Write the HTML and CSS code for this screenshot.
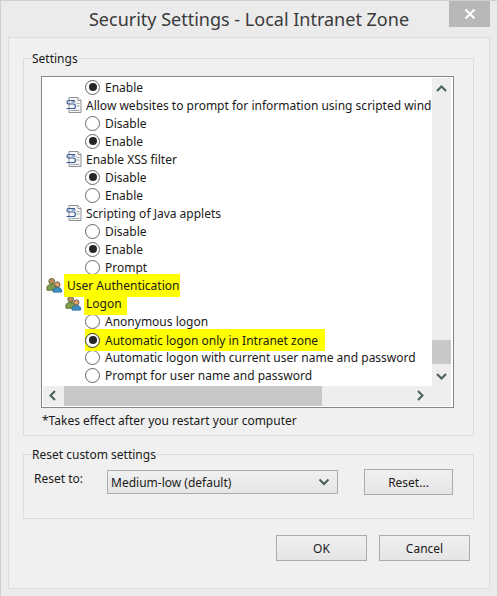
FILE: index.html
```html
<!DOCTYPE html>
<html lang="en">

<head>
    <meta charset="UTF-8">
    <title>Security Settings - Local Intranet Zone</title>
    <link rel="stylesheet" href="styles.css">
</head>

<body>
    <svg class="icon-defs" width="0" height="0">
        <symbol id="script-icon" viewBox="0 0 16 16">
            <path d="M3.500 .5h9l3 3v12h-12z" fill="#f6f6f6" stroke="#8d8f92"/>
            <path d="M12.500 .5v3h3" fill="#fff" stroke="#8d8f92"/>
            <path d="M9.500 3.500H3C1 3.500 1 7 3 7h5C10.500 7 10.500 11.500 8 11.500H1" fill="none" stroke="#3a5f9c" stroke-width="1.200"/>
            <path d="M6 5h4" stroke="#3a5f9c"/>
            <path d="M11 6.500h3M11 9h3M5 13.500h9" stroke="#a5a8ab"/>
        </symbol>
        <symbol id="users-icon" viewBox="0 0 18 16">
            <circle cx="6" cy="4" r="3" fill="#b98a5a" stroke="#5b6b3a"/>
            <path d="M1 13.500v-3c0-2 2-3 5-3s5 1 5 3v3z" fill="#7d9c4c" stroke="#55702f"/>
            <circle cx="12" cy="7.500" r="2.800" fill="#d9a36b" stroke="#6b5436"/>
            <path d="M7.500 15.500v-2c0-1.800 2-2.800 4.500-2.800s4.500 1 4.500 2.800v2z" fill="#3d8fc4" stroke="#2a6a96"/>
        </symbol>
    </svg>

    <div class="window">
        <div class="title-bar">Security Settings - Local Intranet Zone</div>
        <button class="close-btn" type="button" aria-label="Close">
            <svg width="12" height="12" viewBox="0 0 12 12">
                <path d="M1.500 1.500l9 9M10.500 1.500l-9 9" stroke="#fff" stroke-width="2"/>
            </svg>
        </button>

        <div class="client">
            <fieldset class="group">
                <legend>Settings</legend>

                <div class="list-box">
                    <div class="list-items">
                        <div class="row option"><span class="radio checked"></span>Enable</div>
                        <div class="row heading"><svg class="row-icon"><use href="#script-icon"/></svg>Allow websites to prompt for information using scripted windows</div>
                        <div class="row option"><span class="radio"></span>Disable</div>
                        <div class="row option"><span class="radio checked"></span>Enable</div>
                        <div class="row heading"><svg class="row-icon"><use href="#script-icon"/></svg>Enable XSS filter</div>
                        <div class="row option"><span class="radio checked"></span>Disable</div>
                        <div class="row option"><span class="radio"></span>Enable</div>
                        <div class="row heading"><svg class="row-icon"><use href="#script-icon"/></svg>Scripting of Java applets</div>
                        <div class="row option"><span class="radio"></span>Disable</div>
                        <div class="row option"><span class="radio checked"></span>Enable</div>
                        <div class="row option"><span class="radio"></span>Prompt</div>
                        <div class="row top-heading"><svg class="row-icon"><use href="#users-icon"/></svg><span class="marker marker-auth">User Authentication</span></div>
                        <div class="row heading"><svg class="row-icon"><use href="#users-icon"/></svg><span class="marker marker-logon">Logon</span></div>
                        <div class="row option"><span class="radio"></span>Anonymous logon</div>
                        <div class="row option"><span class="marker marker-auto"><span class="radio checked"></span>Automatic logon only in Intranet zone</span></div>
                        <div class="row option"><span class="radio"></span>Automatic logon with current user name and password</div>
                        <div class="row option"><span class="radio"></span>Prompt for user name and password</div>
                    </div>

                    <div class="scroll-v">
                        <svg class="arrow" width="19" height="20" viewBox="0 0 19 20"><path d="M5 13l4.500-4.500 4.500 4.500" class="chevron"/></svg>
                        <div class="track-v"><div class="thumb-v"></div></div>
                        <svg class="arrow" width="19" height="20" viewBox="0 0 19 20"><path d="M5 8l4.500 4.500 4.500-4.500" class="chevron"/></svg>
                    </div>

                    <div class="scroll-h">
                        <svg class="arrow" width="21" height="20" viewBox="0 0 21 20"><path d="M12 5l-4.500 4.500 4.500 4.500" class="chevron"/></svg>
                        <div class="track-h"><div class="thumb-h"></div></div>
                        <svg class="arrow arrow-right" width="21" height="20" viewBox="0 0 21 20"><path d="M9 5l4.500 4.500-4.500 4.500" class="chevron"/></svg>
                    </div>

                    <div class="scroll-corner"></div>
                </div>

                <p class="note">*Takes effect after you restart your computer</p>
            </fieldset>

            <fieldset class="group reset-group">
                <legend>Reset custom settings</legend>

                <div class="reset-row">
                    <label class="reset-label">Reset to:</label>
                    <div class="combo">
                        <span>Medium-low (default)</span>
                        <svg width="12" height="8" viewBox="0 0 12 8"><path d="M1.500 1.500l4.500 4.500 4.500-4.500" class="chevron"/></svg>
                    </div>
                    <button class="btn btn-reset" type="button">Reset...</button>
                </div>
            </fieldset>

            <div class="actions">
                <button class="btn" type="button">OK</button>
                <button class="btn" type="button">Cancel</button>
            </div>
        </div>
    </div>
</body>

</html>
```

FILE: styles.css
```css
* {
    box-sizing: border-box;
}

html,
body {
    margin: 0;
    height: 100%;
}

body {
    font-family: "Noto Sans", "Open Sans", sans-serif;
    font-size: 12px;
    color: #1a1a1a;
    background-color: #ebebeb;
    overflow: hidden;
}

.icon-defs {
    position: absolute;
}

.window {
    position: relative;
    height: 596px;
    padding: 0 8px 7px;
    border-top: 1px solid #cfcfcf;
    border-left: 1px solid #cfcfcf;
    border-right: 1px solid #cfcfcf;
    display: flex;
    flex-direction: column;
}

.title-bar {
    height: 36px;
    display: flex;
    justify-content: center;
    align-items: center;
    font-size: 18px;
    color: #3a3a3a;
}

.close-btn {
    position: absolute;
    top: 0;
    right: 7px;
    width: 41px;
    height: 26px;
    padding: 0;
    border: none;
    background-color: #b8b8b8;
    display: flex;
    justify-content: center;
    align-items: center;
}

.client {
    flex: 1;
    margin: 0 -1px;
    padding: 12px 15px 0 14px;
    background-color: #f0f0f0;
    border: 1px solid #dcdcdc;
}

.group {
    margin: 0;
    padding: 10px 0 0 8px;
    border: 1px solid #dcdcdc;
    min-width: 0;
}

.group legend {
    padding: 0;
    height: 16px;
    line-height: 18px;
}

.list-box {
    margin-left: 9px;
    width: 413px;
    height: 332px;
    padding: 1px;
    background-color: #fff;
    border: 1px solid #82878c;
    display: grid;
    grid-template-columns: 389px 20px;
    grid-template-rows: 308px 20px;
}

.list-items {
    overflow: hidden;
    white-space: nowrap;
}

.row {
    height: 18px;
    display: flex;
    align-items: center;
}

.option {
    padding-left: 42px;
}

.heading {
    padding-left: 22px;
}

.top-heading {
    padding-left: 3px;
}

.row-icon {
    width: 17px;
    height: 16px;
    margin-right: 4px;
    flex-shrink: 0;
}

.radio {
    width: 15px;
    height: 15px;
    margin-right: 5px;
    flex-shrink: 0;
    border: 1px solid #666;
    border-radius: 50%;
    background-color: #fff;
    display: inline-flex;
    justify-content: center;
    align-items: center;
}

.radio.checked::after {
    content: "";
    width: 8px;
    height: 8px;
    border-radius: 50%;
    background-color: #262626;
}

/* hand drawn yellow highlights from the annotated screenshot */
.marker {
    background-color: #ffff00;
    display: inline-flex;
    align-items: center;
    position: relative;
}

.marker-auth {
    height: 23px;
    padding: 0 1px 0 3px;
    margin: 0 0 0 -3px;
    z-index: 1;
}

.marker-logon {
    height: 23px;
    padding: 0 5px 0 2px;
    margin-left: -2px;
}

.marker-auto {
    height: 22px;
    margin-top: 2px;
    padding-right: 7px;
}

.marker-auto .radio {
    border-color: #333;
}

.scroll-v {
    margin-right: 1px;
    background-color: #eeeeee;
    display: flex;
    flex-direction: column;
}

.track-v {
    flex: 1;
}

.thumb-v {
    height: 24px;
    margin-top: 242px;
    background-color: #c8c8c8;
}

.scroll-h {
    background-color: #eeeeee;
    display: flex;
}

.track-h {
    flex: 1;
}

.thumb-h {
    width: 258px;
    height: 100%;
    background-color: #c8c8c8;
}

.scroll-corner {
    margin-right: 1px;
    background-color: #eeeeee;
}

.arrow {
    flex-shrink: 0;
    display: block;
}

.arrow-right {
    margin-right: 2px;
}

.chevron {
    fill: none;
    stroke: #4a5f55;
    stroke-width: 2;
}

.note {
    margin: 4px 0 5px 1px;
    padding-left: 9px;
    height: 18px;
    line-height: 18px;
}

.reset-group {
    margin-top: 10px;
    height: 73px;
    padding: 8px 0 0 10px;
}

.reset-group legend {
    margin-left: -2px;
}

.reset-row {
    display: flex;
    align-items: flex-start;
}

.reset-label {
    width: 73px;
    height: 18px;
    line-height: 18px;
}

.combo {
    width: 231px;
    height: 24px;
    padding: 0 7px 0 3px;
    border: 1px solid #acacac;
    background: linear-gradient(#f0f0f0, #e5e5e5);
    display: flex;
    justify-content: space-between;
    align-items: center;
}

.btn {
    width: 91px;
    height: 26px;
    padding: 0;
    font-family: inherit;
    font-size: 12px;
    color: #1a1a1a;
    border: 1px solid #acacac;
    background: linear-gradient(#f0f0f0, #e5e5e5);
}

.btn-reset {
    width: 89px;
    margin-top: -1px;
    margin-left: 26px;
}

.actions {
    margin-top: 16px;
    padding-right: 4px;
    display: flex;
    justify-content: flex-end;
    gap: 12px;
}
```
